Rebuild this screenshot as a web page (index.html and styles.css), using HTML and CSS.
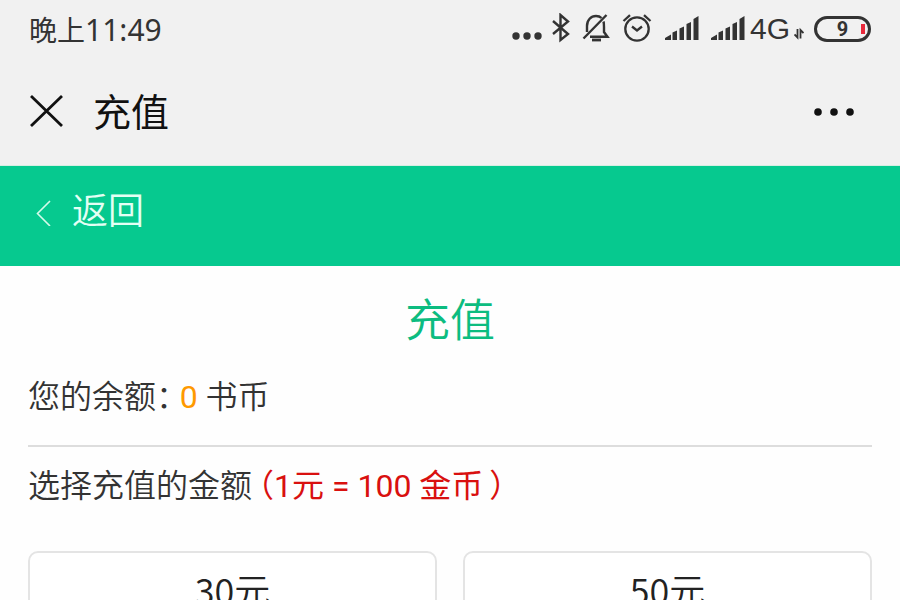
FILE: index.html
```html
<!DOCTYPE html>
<html lang="zh-CN">
<head>
    <meta charset="UTF-8">
    <meta name="viewport" content="width=device-width, initial-scale=1.0">
    <title>充值</title>
    <link rel="stylesheet" href="styles.css">
</head>
<body>
    <div class="status-bar">
        <div class="status-time">晚上<span class="clock">11:49</span></div>
        <div class="status-icons">
            <svg width="32" height="32" viewBox="0 0 32 32" fill="#333">
                <circle cx="6" cy="23" r="3.7"/><circle cx="17" cy="23" r="3.7"/><circle cx="28" cy="23" r="3.7"/>
            </svg>
            <svg width="20" height="32" viewBox="0 0 20 32" fill="none" stroke="#333" stroke-width="2.4">
                <path d="M1 8L16 21L8.500 27V2L16 8.500L1 21"/>
            </svg>
            <svg width="28" height="32" viewBox="0 0 28 32" fill="none" stroke="#333" stroke-width="2.4">
                <path d="M5 19V13C5 7 9 3 14 3C16.500 3 18 3.500 19.500 5M21.500 8.500C22 10 22 12 22 14V19L25.500 23.800H8M24.500 2L1.500 25.500"/>
                <path d="M10 27H19" stroke-width="2.800"/>
            </svg>
            <svg width="34" height="32" viewBox="0 0 34 32" fill="none" stroke="#333" stroke-width="2.3">
                <circle cx="17" cy="16" r="11.700"/>
                <path d="M12 13.500L17 17.500L22 13.500M3.500 8L10 2.200M30.500 8L24 2.200"/>
            </svg>
            <svg width="36" height="32" viewBox="0 0 36 32" fill="#333">
                <path d="M1 27V25L7 21.500V27ZM8.500 19.500L13 17.500V27H8.500ZM15.500 15.500L20 13.500V27H15.500ZM22.500 11L27 9V27H22.500ZM29.500 6L34.500 3V27H29.500Z"/>
            </svg>
            <div class="network">
                <svg width="36" height="32" viewBox="0 0 36 32" fill="#333">
                    <path d="M1 27V25L7 21.500V27ZM8.500 19.500L13 17.500V27H8.500ZM15.500 15.500L20 13.500V27H15.500ZM22.500 11L27 9V27H22.500ZM29.500 6L34.500 3V27H29.500Z"/>
                </svg>
                <span class="network-type">4G</span>
                <svg width="10" height="32" viewBox="0 0 10 32" fill="none" stroke="#333" stroke-width="1.8">
                    <path d="M3.500 16V24.500L0.500 21.500M6.500 25.500V17L9.500 20"/>
                </svg>
            </div>
            <div class="battery">9</div>
        </div>
    </div>

    <header class="nav-bar">
        <button class="icon-btn" type="button" aria-label="关闭">
            <svg width="36" height="36" viewBox="0 0 36 36" fill="none" stroke="#111" stroke-width="2.8">
                <path d="M3 2L34 32M34 2L3 32"/>
            </svg>
        </button>
        <h1 class="nav-title">充值</h1>
        <button class="icon-btn" type="button" aria-label="更多">
            <svg width="44" height="36" viewBox="0 0 44 36" fill="#111">
                <circle cx="6" cy="18" r="3.8"/><circle cx="22" cy="18" r="3.8"/><circle cx="38" cy="18" r="3.8"/>
            </svg>
        </button>
    </header>

    <nav class="back-bar">
        <a class="back-link" href="#">
            <svg width="16" height="28" viewBox="0 0 16 28" fill="none" stroke="#d5fbea" stroke-width="1.6">
                <path d="M14 3L1.500 15.500L14 28"/>
            </svg>
            <span>返回</span>
        </a>
    </nav>

    <main class="content">
        <h2 class="page-title">充值</h2>
        <p class="balance">您的余额<span class="half">：</span> <span class="amount">0</span> 书币</p>
        <p class="choose">选择充值的金额<span class="rate"><span class="half paren">（</span>1元 = 100 金币<span class="half paren">）</span></span></p>
        <div class="options">
            <button class="option" type="button">30元</button>
            <button class="option" type="button">50元</button>
        </div>
    </main>
</body>
</html>
```

FILE: styles.css
```css
* {
    box-sizing: border-box;
}
body {
    margin: 0;
    height: 100vh;
    overflow: hidden;
    background: #fefefe;
    color: #333;
    font-family: Roboto, "Noto Sans CJK SC", sans-serif;
}
button {
    font-family: inherit;
    cursor: pointer;
}

/* phone status bar */
.status-bar {
    display: flex;
    justify-content: space-between;
    align-items: center;
    height: 58px;
    padding: 0 29px;
    background: #f1f1f1;
}
.status-time {
    padding-top: 4px;
    font-size: 28px;
    line-height: 32px;
}
.clock {
    font-family: "Noto Sans", sans-serif;
    font-size: 30px;
}
.status-icons {
    display: flex;
    align-items: center;
    gap: 10px;
}
.network {
    display: flex;
    align-items: center;
    gap: 4px;
}
.network-type {
    font-family: "Liberation Sans", sans-serif;
    font-size: 30px;
    line-height: 32px;
}
.battery {
    width: 57px;
    height: 26px;
    border: 3px solid #333;
    border-radius: 13px;
    background: linear-gradient(#e8293b, #e8293b) right 3px center / 4px 10px no-repeat;
    font-size: 20px;
    font-weight: 700;
    line-height: 20px;
    text-align: center;
}

/* title bar */
.nav-bar {
    display: flex;
    align-items: center;
    height: 108px;
    padding: 0 44px 0 28px;
    background: #f1f1f1;
    border-bottom: 1px solid #d5eee2;
}
.icon-btn {
    display: flex;
    padding: 0;
    border: none;
    background: none;
}
.nav-title {
    flex: 1;
    margin: 0 0 0 29px;
    padding-top: 2px;
    color: #111;
    font-size: 38px;
    font-weight: 400;
    line-height: 44px;
}

.back-bar {
    display: flex;
    align-items: center;
    height: 100px;
    padding: 0 36px 8px;
    background: #06c98f;
}
.back-link {
    display: flex;
    align-items: center;
    gap: 20px;
    color: #e4fff4;
    font-size: 36px;
    font-weight: 350;
    line-height: 44px;
    text-decoration: none;
}

.content {
    padding: 24px 28px;
}
.page-title {
    margin: 0;
    color: #0cbc80;
    font-size: 45px;
    font-weight: 350;
    line-height: 64px;
    text-align: center;
}
.balance,
.choose {
    margin: 0;
    font-size: 32px;
    font-weight: 350;
    line-height: 40px;
}
.balance {
    padding: 20px 0 28px;
    border-bottom: 2px solid #ddd;
}
.choose {
    padding: 16px 0 45px;
}
.half {
    font-family: "Noto Sans CJK SC", sans-serif;
    font-feature-settings: "halt";
}
.paren {
    margin-left: 6px;
}
.amount {
    color: #f90;
    font-weight: 400;
}
.rate {
    color: #d9100f;
    font-weight: 400;
}

.options {
    display: grid;
    grid-template-columns: 1fr 1fr;
    gap: 26px;
}
.option {
    padding: 14px 0;
    border: 2px solid #e4e4e4;
    border-radius: 10px;
    background: #fff;
    color: #222;
    font-family: "Noto Sans CJK SC", sans-serif;
    font-size: 36px;
    font-weight: 350;
    line-height: 44px;
}
```
